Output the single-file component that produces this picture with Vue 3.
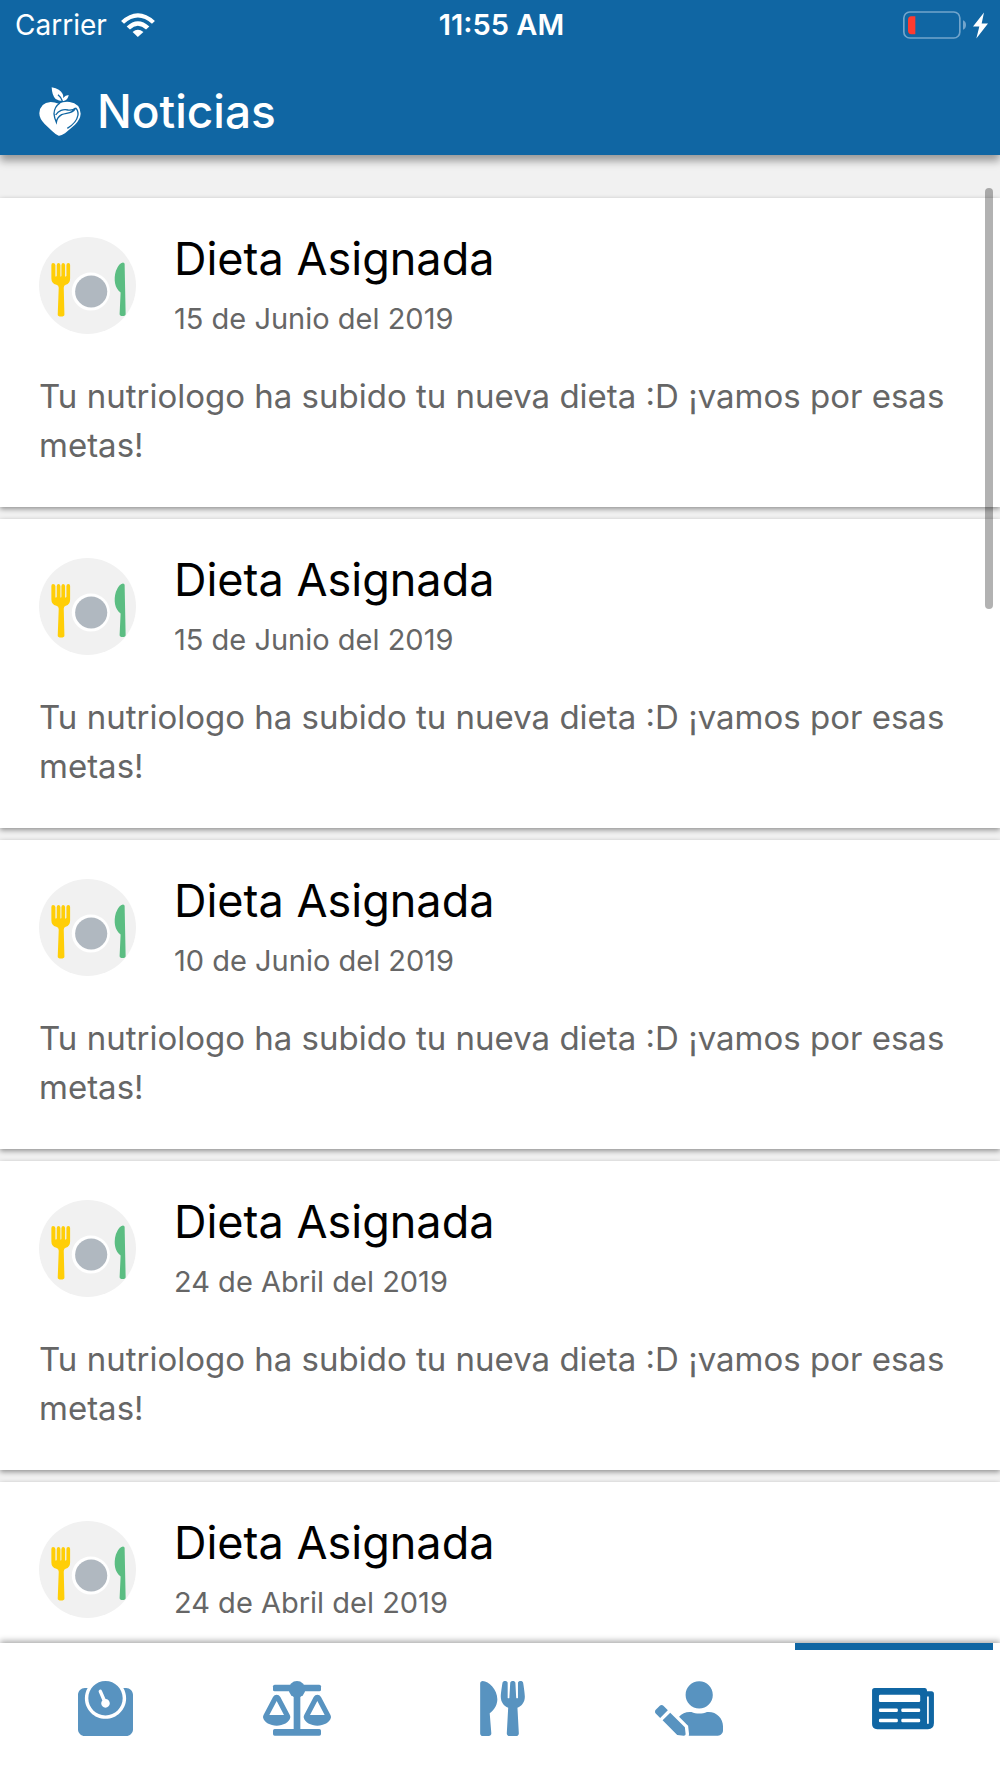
<script setup>
const message = 'Tu nutriologo ha subido tu nueva dieta :D ¡vamos por esas metas!'

const news = [
  { id: 1, title: 'Dieta Asignada', date: '15 de Junio del 2019', message },
  { id: 2, title: 'Dieta Asignada', date: '15 de Junio del 2019', message },
  { id: 3, title: 'Dieta Asignada', date: '10 de Junio del 2019', message },
  { id: 4, title: 'Dieta Asignada', date: '24 de Abril del 2019', message },
  { id: 5, title: 'Dieta Asignada', date: '24 de Abril del 2019', message },
]
</script>

<template>
  <div class="app">
    <header class="header">
      <div class="status">
        <div class="status-side">
          <span>Carrier</span>
          <svg class="wifi" viewBox="362 36 103 73" aria-hidden="true">
            <path d="M362 60Q413 13 465 60L456 69Q413 31 371 69Z" />
            <path d="M379 77Q413 45 448 77L438 86Q413 64 389 86Z" />
            <path d="M397 94Q413 80 430 94L413 109Z" />
          </svg>
        </div>
        <span class="clock">11:55 AM</span>
        <div class="status-side end">
          <svg class="battery" viewBox="69 31 255 83" aria-hidden="true">
            <rect x="71.500" y="33.500" width="168" height="78" rx="18" fill="none" stroke="#72a5cc" stroke-width="5" />
            <path d="M106 46H94Q84 46 84 58V88Q84 100 94 100H106Z" fill="#ff3b30" />
            <path d="M249 58Q258 61 258 72Q258 84 249 87Z" fill="#72a5cc" />
            <path d="M312 35L279 77H298L289 113L324 68H305Z" fill="#fff" />
          </svg>
        </div>
      </div>
      <div class="title-bar">
        <svg class="logo" viewBox="116 260 124 147" aria-hidden="true">
          <path fill="#fff" d="M174 406Q166 404 155 393L132 371Q116 355 116 339Q118 307 150 305Q162 305 174 310Q190 303 207 305Q238 309 240 340Q239 357 223 373L193 399Q181 407 174 406Z" />
          <path fill="#fff" d="M153 261Q179 266 186 281Q189 287 187 293Q195 284 204 284Q202 299 189 302Q176 303 165 296Q154 286 153 261Z" />
          <path fill="none" stroke="#1066a3" stroke-width="4" d="M172 283Q182 291 185 302M178 308Q161 319 160 340Q161 353 167 366Q169 351 183 343C200 337 217 340 225 323Q216 331 202 329C188 325 173 331 165 344M225 323Q233 330 232 344Q228 367 200 384" />
        </svg>
        <h1>Noticias</h1>
      </div>
    </header>

    <div class="content">
      <main class="feed">
        <article v-for="item in news" :key="item.id" class="card">
          <div class="card-head">
            <svg class="avatar" viewBox="56 50 290 290" aria-hidden="true">
              <circle cx="201" cy="195" r="145" fill="#f1f1f1" />
              <path fill="#ffce07" d="M93 134Q93 128 98 128Q104 128 105 134V166Q106 171 109 166V134Q110 128 114 128Q119 128 120 134V166Q121 171 123 166V134Q124 128 128 128Q133 128 134 134V166Q135 171 138 166V134Q138 128 144 128Q149 128 149 134V174Q149 189 136 193Q130 195 130 202L132 282Q132 288 122 288Q112 288 112 282L115 202Q115 195 108 193Q93 189 93 174Z" />
              <circle cx="211" cy="213" r="57" fill="#fff" />
              <circle cx="212" cy="213" r="48" fill="#b0b8c0" />
              <path fill="#5bbd82" d="M312 131Q312 126 307 126Q295 127 286 151C278 177 283 204 300 216L297 280Q297 286 306 286Q315 286 315 280Z" />
            </svg>
            <div class="card-titles">
              <h2>{{ item.title }}</h2>
              <time>{{ item.date }}</time>
            </div>
          </div>
          <p>{{ item.message }}</p>
        </article>
      </main>
      <span class="scroll-thumb" aria-hidden="true"></span>
    </div>

    <nav class="tabs" aria-label="Secciones">
      <button type="button" class="tab" aria-label="Peso">
        <svg viewBox="0 0 512 512" width="55" height="55">
          <path transform="matrix(-1 0 0 1 512 0)" d="M448 64h-25.980C438.440 92.280 448 125.010 448 160c0 105.870-86.130 192-192 192S64 265.870 64 160c0-34.990 9.560-67.720 25.980-96H64C28.650 64 0 92.650 0 128v320c0 35.350 28.650 64 64 64h384c35.350 0 64-28.650 64-64V128c0-35.350-28.650-64-64-64zM256 320c88.370 0 160-71.630 160-160S344.370 0 256 0 96 71.630 96 160s71.630 160 160 160zm-.300-151.940l33.580-78.360c3.500-8.170 12.940-11.920 21.030-8.410 8.120 3.480 11.880 12.890 8.410 21l-33.670 78.550C291.730 188 296 197.450 296 208c0 22.090-17.910 40-40 40s-40-17.910-40-40c0-21.980 17.760-39.770 39.700-39.940z" />
        </svg>
      </button>
      <button type="button" class="tab wide" aria-label="Balance">
        <svg viewBox="665 153 204 165" width="68" height="55">
          <rect x="695" y="164" width="144" height="20" rx="5" />
          <rect x="695" y="297" width="144" height="20" rx="5" />
          <rect x="757" y="178" width="20" height="130" />
          <circle cx="767" cy="178" r="25" />
          <path fill-rule="evenodd" d="M695 201Q699 194 706 194Q713 194 717 201L745 254Q747 258 747 262C744 278 725 287 706 287S668 278 665 262Q665 258 667 254ZM706 213L684 255H728Z" />
          <path fill-rule="evenodd" d="M817 201Q821 194 828 194Q835 194 839 201L867 254Q869 258 869 262C866 278 847 287 828 287S790 278 787 262Q787 258 789 254ZM828 213L806 255H850Z" />
        </svg>
      </button>
      <button type="button" class="tab" aria-label="Dieta">
        <svg viewBox="0 0 416 512" width="45" height="55">
          <path transform="matrix(-1 0 0 1 416 0)" d="M207.900 15.200c.8 4.700 16.100 94.500 16.100 128.800 0 52.300-27.800 89.600-68.900 104.600L168 486.700c.7 13.700-10.200 25.300-24 25.300H80c-13.700 0-24.700-11.500-24-25.300l12.900-238.100C27.700 233.600 0 196.200 0 144 0 109.600 15.300 19.900 16.100 15.200 19.300-5.100 61.400-5.400 64 16.300v141.200c1.300 3.400 15.100 3.200 16 0 1.400-25.300 7.900-139.200 8-141.800 3.300-20.800 44.700-20.800 47.900 0 .2 2.700 6.600 116.500 8 141.800.9 3.200 14.800 3.400 16 0V16.300c2.600-21.600 44.800-21.400 48-1.100zm119.200 285.700l-15 185.100c-1.200 14 9.900 26 23.900 26h56c13.300 0 24-10.700 24-24V24c0-13.200-10.700-24-24-24-82.500 0-221.400 178.500-64.900 300.900z" />
        </svg>
      </button>
      <button type="button" class="tab wide" aria-label="Perfil">
        <svg viewBox="0 0 640 512" width="68" height="55">
          <path transform="matrix(-1 0 0 1 640 0)" d="M224 256c70.700 0 128-57.300 128-128S294.700 0 224 0 96 57.300 96 128s57.300 128 128 128zm89.600 32h-16.700c-22.200 10.200-46.900 16-72.900 16s-50.600-5.800-72.900-16h-16.700C60.200 288 0 348.200 0 422.400V464c0 26.500 21.500 48 48 48h274.900c-2.400-6.800-3.400-14-2.600-21.300l6.800-60.900 1.200-11.100 7.900-7.900 77.300-77.300c-24.500-27.700-60-45.500-99.900-45.500zm45.300 145.300l-6.800 61c-1.100 10.200 7.500 18.800 17.600 17.600l60.900-6.800 137.900-137.900-71.700-71.700-137.900 137.800zM633 268.900L595.100 231c-9.300-9.300-24.500-9.300-33.800 0l-37.800 37.800-4.100 4.100 71.800 71.700 41.800-41.800c9.300-9.400 9.300-24.500 0-33.900z" />
        </svg>
      </button>
      <button type="button" class="tab active" aria-label="Noticias" aria-current="page">
        <svg viewBox="0 0 576 512" width="62" height="55">
          <path d="M24 64H488Q512 64 512 96H552Q576 96 576 120V392Q576 448 520 448H48Q0 448 0 400V88Q0 64 24 64Z" />
          <g fill="#fff">
            <rect x="64" y="128" width="384" height="68" rx="12" />
            <rect x="64" y="256" width="176" height="32" rx="12" />
            <rect x="272" y="256" width="176" height="32" rx="12" />
            <rect x="64" y="352" width="176" height="32" rx="12" />
            <rect x="272" y="352" width="176" height="32" rx="12" />
            <path d="M512 144H528V392Q528 400 520 400Q512 400 512 392Z" />
          </g>
        </svg>
      </button>
    </nav>
  </div>
</template>

<style>
body {
  margin: 0;
}
</style>

<style scoped>
.app {
  display: flex;
  flex-direction: column;
  height: 100vh;
  background: #f1f1f1;
  color: #000;
  font-family: Inter, "Liberation Sans", sans-serif;
}

.header {
  position: relative;
  z-index: 2;
  flex: none;
  background: #1066a3;
  color: #fff;
  box-shadow: 0 6px 8px rgba(0, 0, 0, 0.36);
}

.status {
  display: flex;
  align-items: center;
  height: 50px;
  padding: 0 12px 0 15px;
  font-size: 28px;
  line-height: 50px;
}

.status-side {
  display: flex;
  flex: 1;
  align-items: center;
  gap: 14px;
}

.status-side.end {
  justify-content: flex-end;
}

.clock {
  font-size: 29px;
  font-weight: 600;
}

.wifi {
  width: 34px;
  height: 24px;
  fill: #fff;
}

.battery {
  width: 85px;
  height: 28px;
}

.title-bar {
  display: flex;
  align-items: center;
  gap: 16px;
  padding: 33px 39px 16px;
}

.logo {
  width: 42px;
  height: 49px;
}

h1,
h2,
p {
  margin: 0;
}

h1 {
  font-size: 46px;
  font-weight: 500;
  line-height: 56px;
}

.content {
  position: relative;
  flex: 1;
  min-height: 0;
}

.feed {
  display: flex;
  flex-direction: column;
  gap: 12px;
  height: 100%;
  box-sizing: border-box;
  padding-top: 43px;
  overflow-y: auto;
  scrollbar-width: none;
}

.card {
  flex: none;
  padding: 33px 39px 37px;
  background: #fff;
  box-shadow: 0 2px 5px rgba(0, 0, 0, 0.4);
}

.card-head {
  display: flex;
  align-items: center;
  gap: 38px;
  padding-bottom: 33px;
}

.avatar {
  flex: none;
  width: 97px;
  height: 97px;
}

.card-titles {
  display: flex;
  flex-direction: column;
  gap: 12px;
}

h2 {
  font-size: 45px;
  font-weight: 400;
  line-height: 56px;
}

time {
  color: #666;
  font-size: 29px;
  line-height: 40px;
}

p {
  color: #666;
  font-size: 33px;
  line-height: 49px;
}

.scroll-thumb {
  position: absolute;
  top: 33px;
  right: 7px;
  width: 8px;
  height: 421px;
  border-radius: 4px;
  background: rgba(0, 0, 0, 0.3);
}

.tabs {
  position: relative;
  z-index: 1;
  display: flex;
  flex: none;
  justify-content: space-between;
  padding: 38px 66px 42px 78px;
  background: #fff;
  box-shadow: 0 -2px 6px rgba(0, 0, 0, 0.35);
}

.tabs::after {
  position: absolute;
  top: 0;
  right: 7px;
  width: calc(20% - 2px);
  height: 7px;
  background: #1066a3;
  content: "";
}

.tab {
  display: block;
  padding: 0;
  border: 0;
  background: none;
  color: #5893c0;
  cursor: pointer;
}

.tab.wide {
  padding-right: 20px;
}

.tab.active {
  color: #1066a3;
}

.tab svg {
  display: block;
  fill: currentColor;
}
</style>
